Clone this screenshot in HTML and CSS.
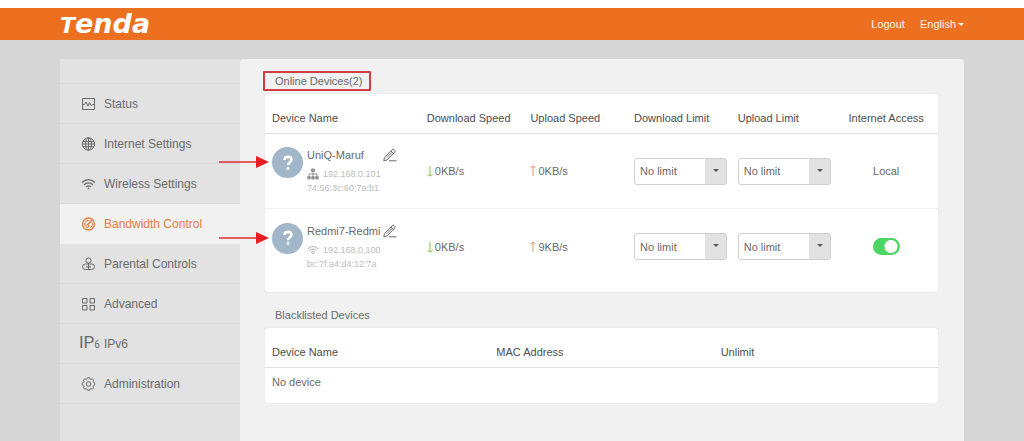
FILE: index.html
```
<!DOCTYPE html>
<html lang="en">
<head>
<meta charset="utf-8">
<title>Tenda - Bandwidth Control</title>
<meta name="viewport" content="width=device-width, initial-scale=1">
<link rel="stylesheet" href="styles.css">
</head>
<body>
<svg class="defs" aria-hidden="true">
  <symbol id="i-edit" viewBox="0 0 14 14"><path d="M1.500 9.500 9.300 1.500q.8-.8 1.700 0l.8.8q.8.8 0 1.600L4 12l-3.200.8zM8 3l2.500 2.500M4 9.500 9 4.300M6 12.800h7.500"/></symbol>
  <symbol id="i-wifi" viewBox="0 0 16 12"><path d="M1 4.500Q8-1.800 15 4.500M3.200 6.900q4.800-4.200 9.600 0M5.500 9q2.500-2 5 0"/><circle cx="8" cy="10.700" r=".9" fill="currentColor" stroke="none"/></symbol>
  <symbol id="i-help" viewBox="0 0 16 20"><path d="M4 6.500Q4 3 8 3t4 3.400c0 2.800-4 2.800-4 6.100"/><circle cx="8" cy="16.300" r="1.600" fill="currentColor" stroke="none"/></symbol>
  <symbol id="i-down" viewBox="0 0 6 12"><path d="M3 1v10M.5 9.500 3 11l2.500-1.500"/></symbol>
  <symbol id="i-up" viewBox="0 0 6 12"><path d="M3 11V1M.5 3 3 1l2.500 2"/></symbol>
  <symbol id="i-arrow" viewBox="0 0 50 12"><path d="M0 6h40" stroke="#dd2b35" stroke-width="1.600"/><path d="M37 0 50 6 37 12z" fill="#ec1c24" stroke="none"/></symbol>
</svg>

<header class="topbar">
  <a class="logo" href="#"><span class="logo-cap">T</span>enda</a>
  <nav class="account">
    <a href="#">Logout</a>
    <button type="button" class="language">English<span class="caret"></span></button>
  </nav>
</header>

<div class="layout">
  <nav class="sidebar">
    <a class="item" href="#"><svg class="icon" viewBox="0 0 14 14"><path d="M1 1.500h12v11H1zM1 7.500h2L4.500 5l2 4L8 5.500l1.500 3 1.500-1h2"/></svg>Status</a>
    <a class="item" href="#"><svg class="icon" viewBox="0 0 14 14"><circle cx="7" cy="7" r="6.200"/><ellipse cx="7" cy="7" rx="3" ry="6.200"/><path d="M7 1v12M1.500 4.500h11M1 7h12M1.500 9.700h11"/></svg>Internet Settings</a>
    <a class="item" href="#"><svg class="icon wifi"><use href="#i-wifi"/></svg>Wireless Settings</a>
    <a class="item active" href="#" aria-current="page"><svg class="icon" viewBox="0 0 14 14"><circle cx="7" cy="7" r="6" stroke-width="1.300"/><path d="M3.200 8.500Q2.800 3.500 7.500 3.200M11 5.500q.5 3.500-2 5" /><path d="M10.500 3 6 8" stroke-width="1.500"/><circle cx="5.900" cy="9" r="1.400"/></svg>Bandwidth Control</a>
    <a class="item" href="#"><svg class="icon" viewBox="0 0 14 14"><circle cx="7" cy="3.500" r="2.600"/><path d="M4 7h6q3 0 3 2.700t-3 2.800H4q-3 0-3-2.800T4 7zM7 6v6.500M4.500 9.800h5"/></svg>Parental Controls</a>
    <a class="item" href="#"><svg class="icon" viewBox="0 0 14 14"><path d="M1 1.500h4.500V6H1zM8.500 1.500H13V6H8.500zM1 8.500h4.500V13H1zM8.500 8.500H13V13H8.500z"/></svg>Advanced</a>
    <a class="item" href="#"><span class="ip-icon" aria-hidden="true">IP<small>6</small></span>IPv6</a>
    <a class="item" href="#"><svg class="icon" viewBox="0 0 14 14"><circle cx="7" cy="7" r="2.300"/><path d="m5.600 1.800.6-1.100h1.600l.6 1.100 1.300.5 1.200-.4 1.200 1.200-.4 1.200.5 1.300 1.100.6v1.600l-1.100.6-.5 1.300.4 1.200-1.200 1.200-1.200-.4-1.300.5-.6 1.100H6.200l-.6-1.100-1.300-.5-1.200.4-1.200-1.200.4-1.200-.5-1.300-1.100-.6V6.200l1.100-.6.5-1.300-.4-1.200 1.200-1.200 1.200.4z"/></svg>Administration</a>
  </nav>

  <main class="panel">
    <h2 class="title">Online Devices(2)<span class="highlight"></span></h2>
    <div class="card">
      <table class="devices">
        <thead>
          <tr><th class="name-col">Device Name</th><th>Download Speed</th><th>Upload Speed</th><th>Download Limit</th><th>Upload Limit</th><th class="access">Internet Access</th></tr>
        </thead>
        <tbody>
          <tr>
            <td>
              <div class="device">
                <svg class="pointer" aria-hidden="true"><use href="#i-arrow"/></svg>
                <span class="avatar"><svg><use href="#i-help"/></svg></span>
                <div>
                  <div class="name"><span>UniQ-Maruf</span><button type="button" aria-label="Edit UniQ-Maruf"><svg><use href="#i-edit"/></svg></button></div>
                  <div class="address"><svg viewBox="0 0 12 12"><path d="M4.500 1h3v2.500h-3zM.8 8.500h2.400V11H.8zM4.800 8.500h2.400V11H4.800zM8.800 8.500h2.400V11H8.800z" fill="currentColor"/><path d="M6 3v5.500M2 8.500V6h8v2.500"/></svg>192.168.0.101</div>
                  <div class="mac">74:56:3c:60:7a:b1</div>
                </div>
              </div>
            </td>
            <td><span class="speed down"><svg><use href="#i-down"/></svg>0KB/s</span></td>
            <td><span class="speed up"><svg><use href="#i-up"/></svg>0KB/s</span></td>
            <td><span class="select"><select aria-label="UniQ-Maruf download limit"><option>No limit</option></select></span></td>
            <td><span class="select"><select aria-label="UniQ-Maruf upload limit"><option>No limit</option></select></span></td>
            <td class="access">Local</td>
          </tr>
          <tr>
            <td>
              <div class="device">
                <svg class="pointer" aria-hidden="true"><use href="#i-arrow"/></svg>
                <span class="avatar"><svg><use href="#i-help"/></svg></span>
                <div>
                  <div class="name"><span>Redmi7-Redmi</span><button type="button" aria-label="Edit Redmi7-Redmi"><svg><use href="#i-edit"/></svg></button></div>
                  <div class="address"><svg><use href="#i-wifi"/></svg>192.168.0.100</div>
                  <div class="mac">bc:7f:a4:d4:12:7a</div>
                </div>
              </div>
            </td>
            <td><span class="speed down"><svg><use href="#i-down"/></svg>0KB/s</span></td>
            <td><span class="speed up"><svg><use href="#i-up"/></svg>9KB/s</span></td>
            <td><span class="select"><select aria-label="Redmi7-Redmi download limit"><option>No limit</option></select></span></td>
            <td><span class="select"><select aria-label="Redmi7-Redmi upload limit"><option>No limit</option></select></span></td>
            <td class="access"><input class="toggle" type="checkbox" checked aria-label="Redmi7-Redmi internet access"></td>
          </tr>
        </tbody>
      </table>
    </div>

    <h2 class="title">Blacklisted Devices</h2>
    <div class="card">
      <table class="blacklist">
        <thead><tr><th>Device Name</th><th>MAC Address</th><th>Unlimit</th></tr></thead>
        <tbody><tr><td colspan="3">No device</td></tr></tbody>
      </table>
    </div>
  </main>
</div>
</body>
</html>
```
FILE: styles.css
```
* { box-sizing: border-box; }

body {
  margin: 0;
  min-height: 100vh;
  display: flex;
  flex-direction: column;
  padding-top: 8px;
  background: #fff;
  color: #6a6a6a;
  font: 11px/16px "Liberation Sans", Arial, sans-serif;
}

a { color: inherit; text-decoration: none; }
button, select { font: inherit; color: inherit; }
button { padding: 0; border: 0; background: none; cursor: pointer; }
svg { display: block; fill: none; stroke: currentColor; }
.defs { position: absolute; width: 0; height: 0; }

.topbar {
  display: flex;
  justify-content: space-between;
  align-items: center;
  height: 32px;
  padding: 0 60px;
  background: #ed7020;
  color: #fff3e6;
}
.logo {
  padding-top: 2px;
  color: #fff;
  font: italic 700 27px/30px "DejaVu Sans", sans-serif;
}
.logo-cap { font-size: 22px; }
.account { display: flex; gap: 15px; }
.language { display: flex; align-items: center; gap: 2px; }
.caret {
  border: 3px solid transparent;
  border-top-color: currentColor;
  border-bottom: 0;
}

.layout {
  flex: 1;
  display: flex;
  padding: 19px 60px 0;
  background: #d6d6d6;
}
.sidebar {
  flex: 0 0 180px;
  padding-top: 25px;
  background: #e2e2e2;
  font-size: 12px;
}
.item {
  display: flex;
  align-items: center;
  gap: 8px;
  height: 40px;
  padding-left: 21px;
  border-bottom: 1px solid #d9d9d9;
}
.item:first-child { box-shadow: 0 -1px #d9d9d9; }
.item.active { background: #f1f1f1; color: #e77d3e; border-color: #f1f1f1; }
.icon { width: 15px; height: 14px; }
.wifi { stroke-width: 1.5; }
.ip-icon {
  width: 17px;
  margin-left: -2px;
  font: 17px/16px Roboto, sans-serif;
  white-space: nowrap;
}
.ip-icon small { font-size: 10px; }

.panel {
  flex: 1;
  min-width: 0;
  padding: 12px 26px 0 25px;
  background: #f1f1f1;
  border-radius: 4px 4px 0 0;
}
.title {
  position: relative;
  width: fit-content;
  margin: 0 0 3px 10px;
  font-size: 11px;
  font-weight: 400;
  line-height: 20px;
}
.highlight {
  position: absolute;
  inset: 0 -9px 0 -12px;
  border: 2px solid #d43b42;
  border-radius: 1px;
}
.card {
  margin-bottom: 13px;
  padding-bottom: 8px;
  background: #fff;
  border-radius: 3px;
  box-shadow: 0 0 1px #ccc;
}

table { width: 100%; border-collapse: separate; border-spacing: 0; table-layout: fixed; }
th, td { padding: 0 0 0 7px; text-align: left; }
th {
  padding-top: 16px;
  padding-bottom: 7px;
  border-bottom: 1px solid #e2e2e2;
  color: #4d4d4d;
  font-weight: 400;
  white-space: nowrap;
}
th.access, td.access { padding-left: 0; text-align: center; }
.name-col { width: 23%; }
.devices td { height: 75px; }
.devices tbody tr:first-child td { border-bottom: 1px solid #f0f0f0; }
.blacklist td { height: 27px; }

.device { position: relative; display: flex; gap: 4px; }
.pointer { position: absolute; left: -53px; top: 9px; width: 50px; height: 12px; }
.avatar {
  display: grid;
  place-items: center;
  width: 31px;
  height: 31px;
  border-radius: 50%;
  background: #a2b6ca;
  color: #fff;
}
.avatar svg { width: 14px; height: 18px; stroke-width: 3; }
.name { display: flex; align-items: center; }
.name span { width: 76px; }
.name button svg { width: 14px; height: 14px; }
.address, .mac { color: #bdbdbd; font-size: 9px; line-height: 14px; }
.address { display: flex; align-items: center; gap: 4px; padding-top: 4px; }
.address svg { width: 12px; height: 12px; color: #939393; }

.speed { display: flex; align-items: center; gap: 2px; }
.speed svg { width: 6px; height: 12px; }
.down svg { color: #8cc152; }
.up svg { color: #e5925d; }

.select { position: relative; display: block; width: 93px; max-width: 100%; }
.select select {
  appearance: none;
  display: block;
  width: 100%;
  height: 27px;
  padding: 0 24px 0 5px;
  border: 1px solid #cfcfcf;
  border-radius: 3px;
  background: linear-gradient(#e2e2e2, #e2e2e2) right / 21px 100% no-repeat #fff;
}
.select::after {
  content: "";
  position: absolute;
  right: 8px;
  top: 11px;
  border: 3px solid transparent;
  border-top-color: #555;
  border-bottom: 0;
  pointer-events: none;
}

.toggle {
  appearance: none;
  display: block;
  width: 27px;
  height: 17px;
  margin: 0 auto;
  border-radius: 9px;
  background: radial-gradient(circle at 18px 50%, #fff 6px, #4cd563 7px);
}
```
